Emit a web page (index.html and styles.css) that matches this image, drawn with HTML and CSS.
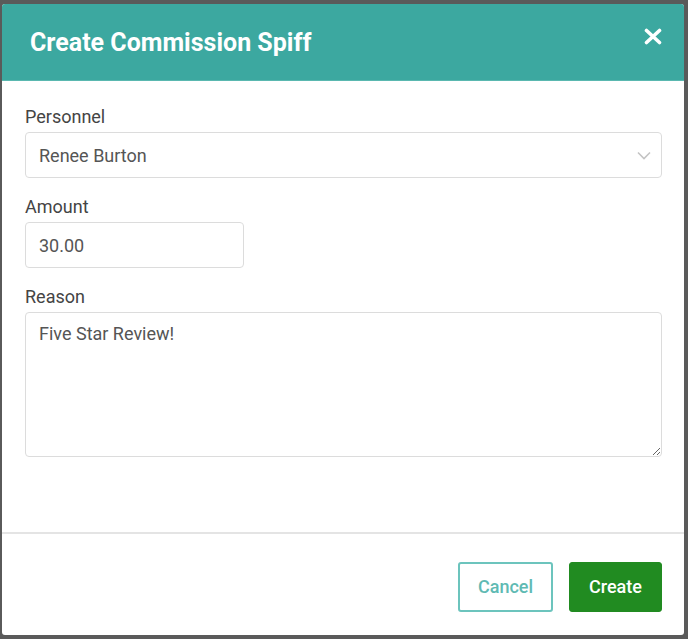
FILE: index.html
```html
<!DOCTYPE html>
<html>
<head>
<meta charset="utf-8">
<link rel="stylesheet" href="styles.css">
</head>
<body>
<div class="modal">
  <div class="modal-header">
    <h1 class="modal-title">Create Commission Spiff</h1>
    <button class="close-btn" aria-label="Close">
      <svg width="18" height="17" viewBox="0 0 18 17"><path d="M2.5 2.5 L15.5 14.5 M15.5 2.5 L2.5 14.5" stroke="#fff" stroke-width="3.6" stroke-linecap="round"/></svg>
    </button>
  </div>
  <div class="modal-body">
    <div class="field">
      <label class="field-label">Personnel</label>
      <div class="select">
        <span class="select-value">Renee Burton</span>
        <svg class="chevron" width="14" height="9" viewBox="0 0 14 9"><path d="M1 1.5 L7 7.5 L13 1.5" fill="none" stroke="#c4c4c4" stroke-width="1.6"/></svg>
      </div>
    </div>
    <div class="field">
      <label class="field-label">Amount</label>
      <input class="input input-amount" type="text" value="30.00">
    </div>
    <div class="field">
      <label class="field-label">Reason</label>
      <textarea class="input textarea">Five Star Review!</textarea>
    </div>
  </div>
  <div class="modal-footer">
    <button class="btn btn-cancel">Cancel</button>
    <button class="btn btn-create">Create</button>
  </div>
</div>
</body>
</html>
```

FILE: styles.css
```css
* { box-sizing: border-box; }
html, body { margin: 0; padding: 0; }
body {
  background: #5a5a5a;
  width: 688px;
  height: 639px;
  padding: 4px 4px 4px 2px;
  font-family: Roboto, "Liberation Sans", sans-serif;
}
.modal {
  width: 682px;
  height: 631px;
  background: #fff;
  border-radius: 3px;
  overflow: hidden;
  display: flex;
  flex-direction: column;
}
.modal-header {
  height: 77px;
  background: #3ca8a0;
  display: flex;
  align-items: center;
  justify-content: space-between;
  padding: 0 22px 0 28px;
  border-bottom: 1px solid #5ab8b0;
}
.modal-title {
  margin: 0;
  color: #fff;
  font-size: 25px;
  font-weight: 700;
  margin-top: 0;
}
.close-btn {
  background: none;
  border: 0;
  padding: 0;
  display: flex;
  margin-top: -12px;
  cursor: pointer;
}
.modal-body {
  flex: 1;
  padding: 25px 22px 0 23px;
  display: flex;
  flex-direction: column;
  gap: 18px;
}
.field { display: flex; flex-direction: column; gap: 5px; }
.field-label {
  font-size: 18px;
  line-height: 21px;
  color: #444;
}
.select, .input {
  border: 1px solid #dcdcdc;
  border-radius: 4px;
  background: #fff;
  font-family: Roboto, "Liberation Sans", sans-serif;
  font-size: 18px;
  color: #555;
}
.select {
  height: 46px;
  display: flex;
  align-items: center;
  justify-content: space-between;
  padding: 0 10px 0 13px;
}
.chevron { margin-top: 1px; }
.input {
  height: 46px;
  padding: 0 13px;
  outline: none;
}
.input-amount { width: 219px; }
.textarea {
  height: 145px;
  padding: 10px 13px;
  resize: vertical;
  line-height: 22px;
}
.modal-footer {
  height: 103px;
  border-top: 2px solid #e4e4e4;
  display: flex;
  justify-content: flex-end;
  align-items: flex-start;
  padding: 28px 22px 0 0;
  gap: 16px;
}
.btn {
  height: 50px;
  border-radius: 3px;
  font-family: Roboto, "Liberation Sans", sans-serif;
  font-size: 18px;
  font-weight: 500;
  cursor: pointer;
  padding-bottom: 2px;
}
.btn-cancel {
  width: 95px;
  background: #fff;
  border: 2px solid #6cc4bd;
  color: #5fbab3;
}
.btn-create {
  width: 93px;
  background: #218b21;
  border: 1px solid #218b21;
  color: #fff;
}
```
